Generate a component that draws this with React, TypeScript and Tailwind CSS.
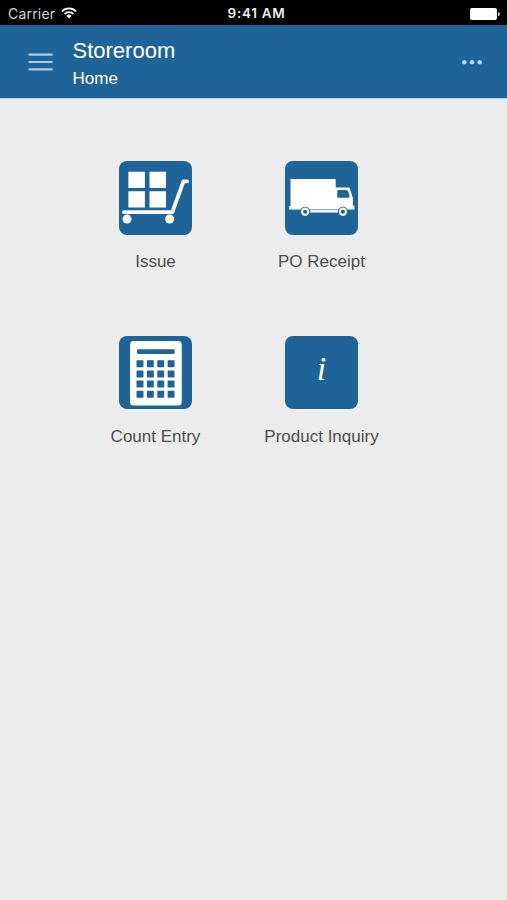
import { ReactElement } from 'react';

interface MenuItem {
  label: string;
  icon: ReactElement;
}

const KEY_OFFSETS = [0, 1, 2, 3];

const CartIcon = () => (
  <svg viewBox="0 0 73 73" className="size-full" fill="#fff">
    <path d="M9.3 10.7h16.4v16H9.3zM30.3 10.7h16.4v16H30.3zM9.3 30h16.4v16.3H9.3zM30.3 30h16.4v16.3H30.3z" />
    <path
      d="M5 50.8H53L64 20.2h3.6"
      fill="none"
      stroke="#fff"
      strokeWidth="3.8"
      strokeLinecap="round"
      strokeLinejoin="round"
    />
    <circle cx="8" cy="57.6" r="4.4" />
    <circle cx="50.3" cy="57.6" r="4.4" />
  </svg>
);

const TruckIcon = () => (
  <svg viewBox="0 0 73 73" className="size-full" fill="#fff">
    <path d="M5.5 18h44.8v8.3h12.4q1.4 0 1.8 1.4l2.9 8.8v8H69v3.6H4v-3.4h1.5z" />
    <path d="M53 28.8h8.7l2.2 4v3.6h-12v-6.5q0-1.1 1.1-1.1z" fill="#1f6499" />
    <path d="M25 48.8h28v2.4H25z" />
    <circle cx="20" cy="50.4" r="5" fill="#1f6499" />
    <circle cx="57.5" cy="50.4" r="5" fill="#1f6499" />
    <circle cx="20" cy="50.4" r="3.1" fill="#1f6499" stroke="#fff" strokeWidth="2" />
    <circle cx="57.5" cy="50.4" r="3.1" fill="#1f6499" stroke="#fff" strokeWidth="2" />
  </svg>
);

const CalculatorIcon = () => (
  <svg viewBox="0 0 73 73" className="size-full" fill="#1f6499">
    <rect x="11" y="5" width="51.3" height="64" rx="3.5" fill="#fff" />
    <rect x="17.9" y="13.2" width="37.4" height="4.6" rx="0.8" />
    {KEY_OFFSETS.map((row) =>
      KEY_OFFSETS.map((col) => (
        <rect
          key={`${row}-${col}`}
          x={17.4 + col * 10.3}
          y={24.1 + row * 10.1}
          width="6.9"
          height="6.9"
          rx="0.6"
        />
      ))
    )}
  </svg>
);

const InfoIcon = () => (
  <span className="pb-1.5 font-['Liberation_Serif',serif] text-[34px] leading-none text-white italic">
    i
  </span>
);

const menuItems: MenuItem[] = [
  { label: 'Issue', icon: <CartIcon /> },
  { label: 'PO Receipt', icon: <TruckIcon /> },
  { label: 'Count Entry', icon: <CalculatorIcon /> },
  { label: 'Product Inquiry', icon: <InfoIcon /> },
];

const StatusBar = () => (
  <div className="grid h-[25px] grid-cols-3 items-center bg-black pt-0.5 text-white">
    <div className="flex items-center gap-1.5 pl-2 font-['Inter',sans-serif] text-[14px] leading-none tracking-[0.2px] text-[#d6d6d6]">
      <span>Carrier</span>
      <svg width="16" height="12" viewBox="0 0 16 12" fill="none" stroke="#fff" strokeWidth="1.8" className="mb-0.5">
        <path d="M1 4.3a10 10 0 0 1 14 0M3.5 6.9a6.4 6.4 0 0 1 9 0" />
        <path d="M8 11.5 5.4 8.8a3.7 3.7 0 0 1 5.2 0z" fill="#fff" stroke="none" />
      </svg>
    </div>
    <span className="pt-px pl-1.5 text-center font-['Inter',sans-serif] text-[13.5px] leading-none font-semibold tracking-[0.7px] text-[#ececec]">
      9:41 AM
    </span>
    <div className="flex items-center justify-end gap-px pr-[7px]">
      <div className="h-3 w-[27px] rounded-[2px] bg-white" />
      <div className="h-1 w-[2px] rounded-r-full bg-white/80" />
    </div>
  </div>
);

const Header = () => (
  <header className="flex h-[74px] items-center border-b border-[#b9cfdf] bg-[#1f6499] pr-[25.5px] pl-7 text-white">
    <button aria-label="Menu">
      <svg width="25" height="18" viewBox="0 0 25 18" stroke="#a9cce8" strokeWidth="2.2">
        <path d="M.5 1.6h24M.5 9h24M.5 16.4h24" />
      </svg>
    </button>
    <div className="ml-[19.5px] flex flex-1 flex-col gap-1 pt-[3px]">
      <h1 className="text-[22px] leading-7">Storeroom</h1>
      <p className="text-[17px] leading-5">Home</p>
    </div>
    <button aria-label="More">
      <svg width="20" height="6" viewBox="0 0 20 6" fill="#b4daf5">
        <circle cx="2.3" cy="3.2" r="2.2" />
        <circle cx="10" cy="3.2" r="2.2" />
        <circle cx="17.7" cy="3.2" r="2.2" />
      </svg>
    </button>
  </header>
);

const MenuTile = ({ item }: { item: MenuItem }) => (
  <button className="flex flex-col items-center gap-[16.5px]">
    <div className="flex size-[73.5px] items-center justify-center rounded-lg bg-[#1f6499]">
      {item.icon}
    </div>
    <span className="text-[17px] leading-[22px] whitespace-nowrap text-[#4d4d4d]">{item.label}</span>
  </button>
);

export default function App() {
  return (
    <div className="flex min-h-screen flex-col bg-[#ececec] font-['Liberation_Sans',sans-serif]">
      <StatusBar />
      <Header />
      <main className="grid grid-cols-[166px_166px] gap-y-[62.5px] pt-[62px] pl-[72.5px]">
        {menuItems.map((item) => (
          <MenuTile key={item.label} item={item} />
        ))}
      </main>
    </div>
  );
}
